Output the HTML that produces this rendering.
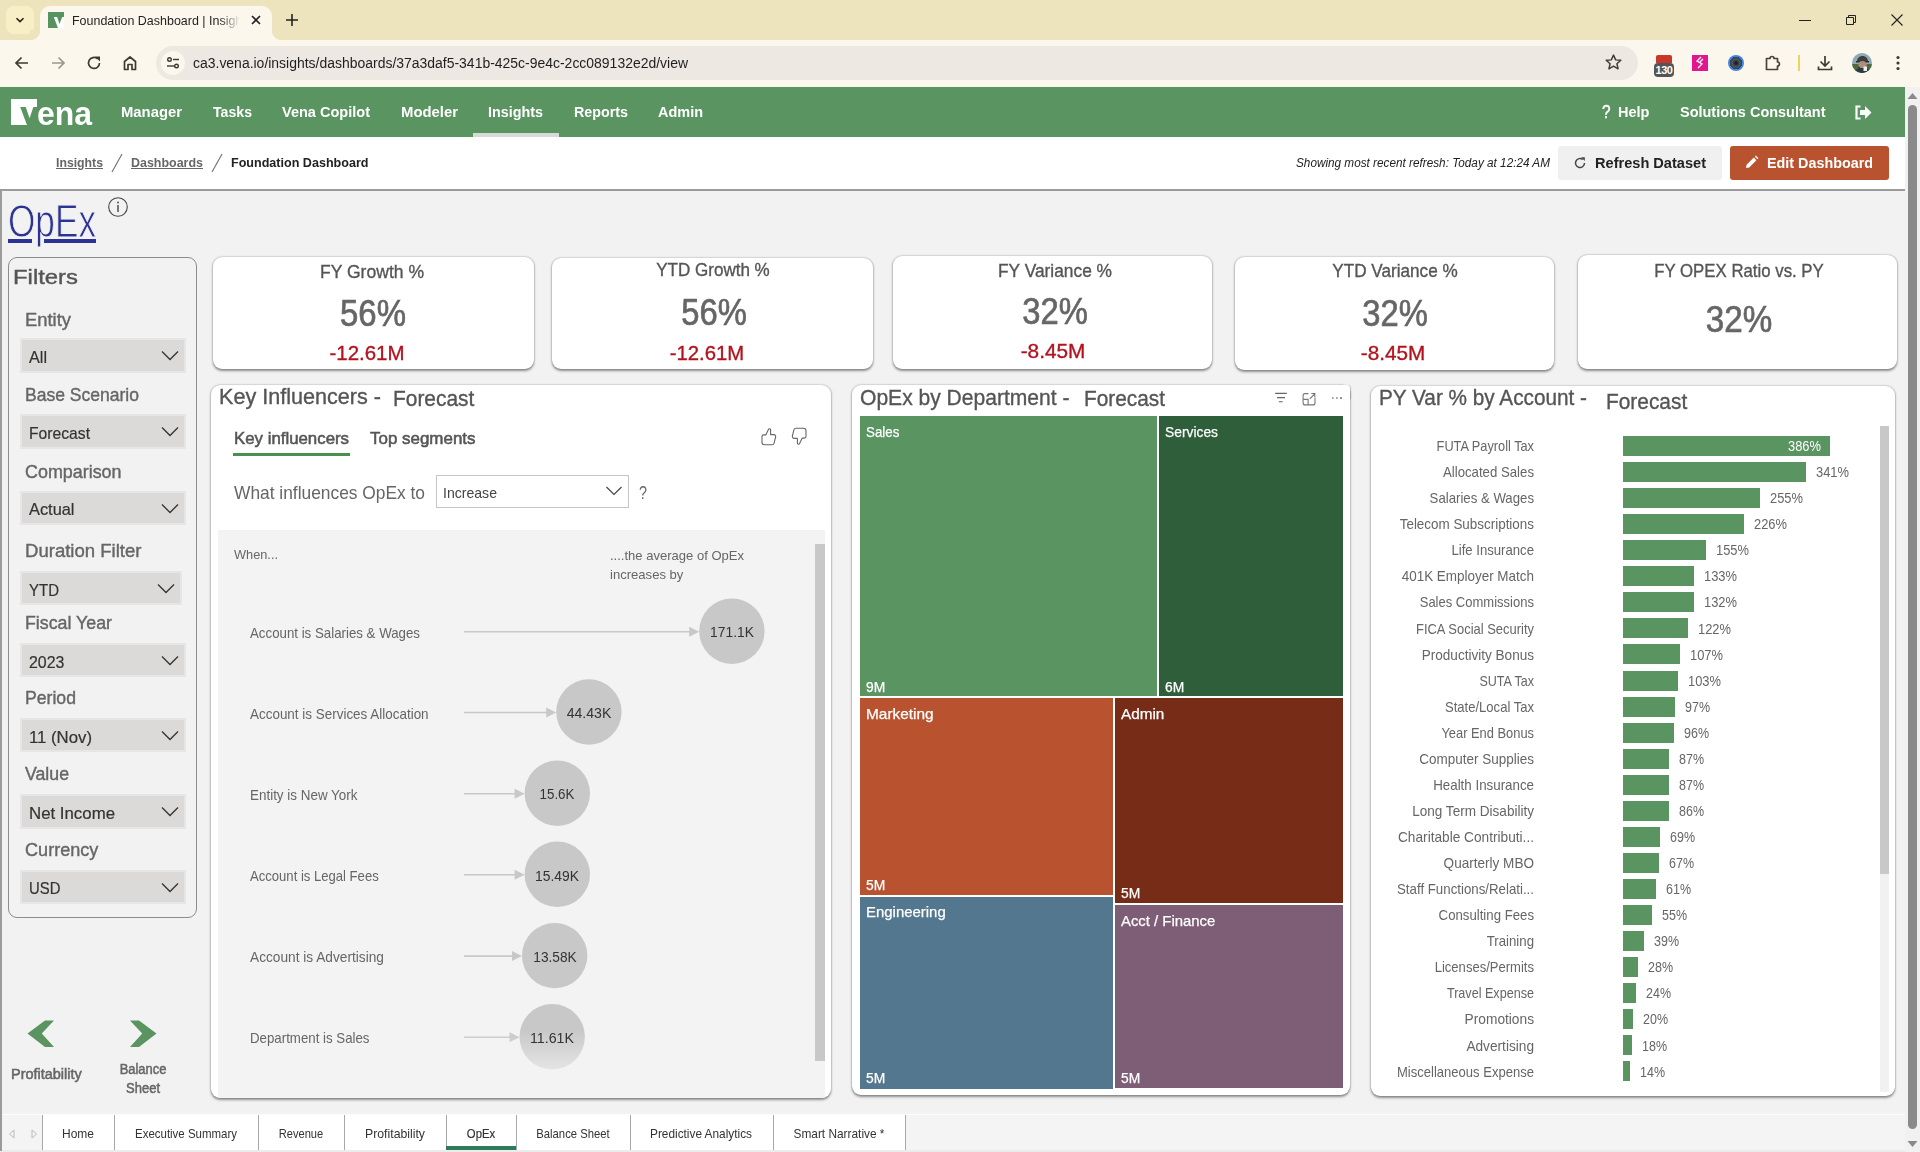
<!DOCTYPE html>
<html><head><meta charset="utf-8">
<style>
*{box-sizing:border-box;margin:0;padding:0}
html,body{width:1920px;height:1152px;overflow:hidden;background:#f2f2f2;font-family:"Liberation Sans",sans-serif}
.a{position:absolute}
.nw{white-space:nowrap}
.card{position:absolute;background:#fff;border-radius:9px;box-shadow:0 1.5px 2.5px rgba(0,0,0,.4),0 0 2px rgba(0,0,0,.28)}
.dd{position:absolute;background:#dddcda;border:2px solid #e8e8e8}
</style></head><body>
<div class="a" style="left:0px;top:0px;width:1920px;height:40px;background:#ede4bd;"></div><div class="a" style="left:6px;top:6px;width:28px;height:28px;background:#f8efc6;border-radius:8px"></div><svg class="a" style="left:14px;top:14px" width="12" height="12" viewBox="0 0 12 12"><path d="M2.5 4.2 6 7.6 9.5 4.2" fill="none" stroke="#222" stroke-width="1.6"/></svg><div class="a" style="left:40px;top:6px;width:232px;height:40px;background:#fcf7ec;border-radius:10px 10px 0 0"></div><div class="a" style="left:30px;top:30px;width:10px;height:10px;background:radial-gradient(circle at 0 0,#ede4bd 10px,#fcf7ec 10.5px);"></div><div class="a" style="left:272px;top:30px;width:10px;height:10px;background:radial-gradient(circle at 100% 0,#ede4bd 10px,#fcf7ec 10.5px);"></div><div class="a" style="left:48px;top:12px;width:16px;height:16px;background:#57935f;"></div><svg class="a" style="left:48px;top:12px" width="16" height="16" viewBox="48 12 16 16"><path d="M53.85 17.1H57.1L59.5 23.9 62.2 17.1H64V28H57.9z" fill="#fff"/></svg><div class="a" style="left:70px;top:8px;width:170px;height:24px;overflow:hidden;-webkit-mask-image:linear-gradient(90deg,#000 88%,transparent)"><div class="a nw" style="top:5.99px;font-size:13px;line-height:13px;color:#1f1f1f;left:2px;transform-origin:0 0;transform:scaleX(0.9591);">Foundation Dashboard | Insights</div></div><svg class="a" style="left:250px;top:14px" width="12" height="12" viewBox="0 0 12 12"><path d="M2 2 10 10M10 2 2 10" stroke="#222" stroke-width="1.6"/></svg><svg class="a" style="left:285px;top:13px" width="14" height="14" viewBox="0 0 14 14"><path d="M7 1v12M1 7h12" stroke="#222" stroke-width="1.6"/></svg><svg class="a" style="left:1798px;top:13px" width="14" height="14" viewBox="0 0 14 14"><path d="M1 7.5h12" stroke="#222" stroke-width="1"/></svg><svg class="a" style="left:1844px;top:13px" width="14" height="14" viewBox="0 0 14 14"><path d="M2.5 4.5h7v7h-7z M4.5 4.5V2.5h7v7h-2" fill="none" stroke="#222" stroke-width="1"/></svg><svg class="a" style="left:1890px;top:13px" width="14" height="14" viewBox="0 0 14 14"><path d="M1.5 1.5 12.5 12.5M12.5 1.5 1.5 12.5" stroke="#222" stroke-width="1.1"/></svg><div class="a" style="left:0px;top:40px;width:1920px;height:47px;background:#fcf7ec;"></div><svg class="a" style="left:13px;top:54px" width="18" height="18" viewBox="0 0 18 18"><path d="M15 9H3M8.5 3.5 3 9l5.5 5.5" fill="none" stroke="#3c3a33" stroke-width="1.7"/></svg><svg class="a" style="left:49px;top:54px" width="18" height="18" viewBox="0 0 18 18"><path d="M3 9h12M9.5 3.5 15 9l-5.5 5.5" fill="none" stroke="#9a978f" stroke-width="1.7"/></svg><svg class="a" style="left:85px;top:54px" width="18" height="18" viewBox="0 0 18 18"><path d="M14.5 9A5.5 5.5 0 1 1 12.6 4.8" fill="none" stroke="#3c3a33" stroke-width="1.7"/><path d="M10 2.5h5v5z" fill="#3c3a33"/></svg><svg class="a" style="left:121px;top:54px" width="18" height="18" viewBox="0 0 18 18"><path d="M3.5 15.5V7.5L9 3l5.5 4.5v8h-3.5v-5h-4v5z" fill="none" stroke="#3c3a33" stroke-width="1.7" stroke-linejoin="round"/></svg><div class="a" style="left:156px;top:46px;width:1482px;height:34px;background:#ede8e1;border-radius:17px"></div><div class="a" style="left:161px;top:51px;width:24px;height:24px;background:#fcf7ec;border-radius:12px"></div><svg class="a" style="left:165px;top:55px" width="16" height="16" viewBox="0 0 16 16"><circle cx="4.5" cy="4.5" r="1.8" fill="none" stroke="#3c3a33" stroke-width="1.4"/><path d="M8 4.5h6" stroke="#3c3a33" stroke-width="1.4"/><circle cx="11.5" cy="11" r="1.8" fill="none" stroke="#3c3a33" stroke-width="1.4"/><path d="M2 11h7" stroke="#3c3a33" stroke-width="1.4"/></svg><div class="a nw" style="top:55.65px;font-size:14px;line-height:14px;color:#1f1f1f;left:193px;transform-origin:0 0;transform:scaleX(0.9968);">ca3.vena.io/insights/dashboards/37a3daf5-341b-425c-9e4c-2cc089132e2d/view</div><svg class="a" style="left:1604px;top:53px" width="19" height="19" viewBox="0 0 20 20"><path d="M10 2.2l2.3 5 5.4.5-4.1 3.6 1.2 5.3L10 13.8l-4.8 2.8 1.2-5.3L2.3 7.7l5.4-.5z" fill="none" stroke="#3c3a33" stroke-width="1.5" stroke-linejoin="round"/></svg><div class="a" style="left:1656px;top:55px;width:16px;height:8px;background:#c9362b;border-radius:2px 2px 0 0"></div><div class="a" style="left:1654px;top:63px;width:20px;height:14px;background:#555;border-radius:4px;color:#fff;font-size:11px;line-height:14px;text-align:center;font-weight:bold;letter-spacing:-.5px">130</div><div class="a" style="left:1692px;top:55px;width:16px;height:16px;background:#e0178f;"></div><svg class="a" style="left:1692px;top:55px" width="16" height="16" viewBox="0 0 16 16"><path d="M9 2 5 6l5 3-4 4M11 4 8 7" fill="none" stroke="#fff" stroke-width="1.3"/></svg><div class="a" style="left:1728px;top:55px;width:16px;height:16px;background:radial-gradient(circle closest-side,#1e2226 0 15%,#4a5560 45%,#37424d 76%,#3d86f0 80%);border-radius:50%"></div><svg class="a" style="left:1764px;top:54px" width="18" height="18" viewBox="0 0 18 18"><path d="M2.5 4.5H6A2 2 0 0 1 10 4.5H13.5V8A2 2 0 0 1 13.5 12V15.5H2.5Z" fill="none" stroke="#4a4530" stroke-width="1.7" stroke-linejoin="round"/></svg><div class="a" style="left:1798px;top:55px;width:2px;height:16px;background:#f0d060;"></div><svg class="a" style="left:1816px;top:54px" width="18" height="18" viewBox="0 0 18 18"><path d="M9 2v10M4.5 7.5 9 12l4.5-4.5M2.5 12.5v3h13v-3" fill="none" stroke="#3c3a33" stroke-width="1.7"/></svg><svg class="a" style="left:1852px;top:53px" width="20" height="20" viewBox="0 0 20 20"><defs><clipPath id="avc"><circle cx="10" cy="10" r="10"/></clipPath></defs><g clip-path="url(#avc)"><rect width="20" height="20" fill="#8fa9b5"/><rect y="11" width="20" height="9" fill="#4d6b3a"/><path d="M5 9c0-4 2.5-6 5.5-6S16 5 16 9z" fill="#3d3f3a"/><path d="M4 8h13v1.6H4z" fill="#2b2d29"/><ellipse cx="10.5" cy="12" rx="4.2" ry="4" fill="#b08f78"/><path d="M6.5 12.5c1 4 7 4.5 8 0v5h-8z" fill="#2a2522"/><path d="M2 20c1-4 4-5 8.5-5s7.5 1 8.5 5z" fill="#2f3a45"/><rect x="11.5" y="13.5" width="3.5" height="4.5" fill="#e8eef3"/></g></svg><svg class="a" style="left:1890px;top:54px" width="16" height="18" viewBox="0 0 16 18"><circle cx="8" cy="3.5" r="1.6" fill="#3c3a33"/><circle cx="8" cy="9" r="1.6" fill="#3c3a33"/><circle cx="8" cy="14.5" r="1.6" fill="#3c3a33"/></svg><div class="a" style="left:0px;top:87px;width:1905px;height:50px;background:#5a9461;"></div><svg class="a" style="left:0;top:87px" width="100" height="50" viewBox="0 87 100 50"><path d="M11 99H37V107H33.35L29.6 118.35 25.7 107H20.2L27 125H11z" fill="#fff"/></svg><div class="a nw" style="top:96.21px;font-size:34px;line-height:34px;color:#fff;font-weight:700;left:36.5px;transform-origin:0 0;transform:scaleX(0.9387);">ena</div><div class="a nw" style="top:104.30px;font-size:15px;line-height:15px;color:#fff;font-weight:700;left:121px;transform-origin:0 0;transform:scaleX(0.9889);">Manager</div><div class="a nw" style="top:104.30px;font-size:15px;line-height:15px;color:#fff;font-weight:700;left:213px;transform-origin:0 0;transform:scaleX(0.9415);">Tasks</div><div class="a nw" style="top:104.30px;font-size:15px;line-height:15px;color:#fff;font-weight:700;left:282px;transform-origin:0 0;transform:scaleX(0.9687);">Vena Copilot</div><div class="a nw" style="top:104.30px;font-size:15px;line-height:15px;color:#fff;font-weight:700;left:401px;transform-origin:0 0;transform:scaleX(0.9910);">Modeler</div><div class="a nw" style="top:104.30px;font-size:15px;line-height:15px;color:#fff;font-weight:700;left:488px;transform-origin:0 0;transform:scaleX(0.9563);">Insights</div><div class="a nw" style="top:104.30px;font-size:15px;line-height:15px;color:#fff;font-weight:700;left:574px;transform-origin:0 0;transform:scaleX(0.9526);">Reports</div><div class="a nw" style="top:104.30px;font-size:15px;line-height:15px;color:#fff;font-weight:700;left:658px;transform-origin:0 0;transform:scaleX(0.9642);">Admin</div><div class="a nw" style="top:104.30px;font-size:15px;line-height:15px;color:#fff;font-weight:700;left:1617.5px;transform-origin:0 0;transform:scaleX(0.9688);">Help</div><div class="a nw" style="top:104.30px;font-size:15px;line-height:15px;color:#fff;font-weight:700;left:1679.5px;transform-origin:0 0;transform:scaleX(0.9647);">Solutions Consultant</div><div class="a nw" style="top:102.76px;font-size:18px;line-height:18px;color:#fff;left:1602px;transform-origin:0 0;transform:scaleX(0.8487);-webkit-text-stroke:0.5px #fff;">?</div><div class="a" style="left:473px;top:133px;width:86px;height:4px;background:#d9d9d9;"></div><svg class="a" style="left:1854px;top:105px" width="18" height="15" viewBox="0 0 18 15"><path d="M6.5 1.5H2.5v12h4" fill="none" stroke="#fff" stroke-width="2.2"/><path d="M6 5h5V1l6.5 6.5L11 14v-4H6z" fill="#fff"/></svg><div class="a" style="left:0px;top:137px;width:1905px;height:52px;background:#fff;"></div><div class="a nw" style="top:155.99px;font-size:13px;line-height:13px;color:#666;font-weight:700;left:56px;transform-origin:0 0;transform:scaleX(0.9429);text-decoration:underline;">Insights</div><svg class="a" style="left:110px;top:153px" width="14" height="20" viewBox="0 0 14 20"><path d="M12 1 2 19" stroke="#777" stroke-width="1.2"/></svg><div class="a nw" style="top:155.99px;font-size:13px;line-height:13px;color:#666;font-weight:700;left:131px;transform-origin:0 0;transform:scaleX(0.9582);text-decoration:underline;">Dashboards</div><svg class="a" style="left:210px;top:153px" width="14" height="20" viewBox="0 0 14 20"><path d="M12 1 2 19" stroke="#777" stroke-width="1.2"/></svg><div class="a nw" style="top:155.99px;font-size:13px;line-height:13px;color:#222;font-weight:700;left:230.5px;transform-origin:0 0;transform:scaleX(0.9664);">Foundation Dashboard</div><div class="a nw" style="top:156.84px;font-size:12px;line-height:12px;color:#222;font-style:italic;left:1296px;transform-origin:0 0;transform:scaleX(0.9797);">Showing most recent refresh: Today at 12:24 AM</div><div class="a" style="left:1558px;top:146px;width:164px;height:34px;background:#f0f0f0;border-radius:3px"></div><svg class="a" style="left:1573px;top:156px" width="14" height="14" viewBox="0 0 14 14"><path d="M11.5 7A4.5 4.5 0 1 1 9.8 3.5" fill="none" stroke="#444" stroke-width="1.5"/><path d="M8.2 1.3h3.6v3.6z" fill="#444"/></svg><div class="a nw" style="top:155.30px;font-size:15px;line-height:15px;color:#222;font-weight:700;left:1595px;transform-origin:0 0;transform:scaleX(0.9718);">Refresh Dataset</div><div class="a" style="left:1730px;top:146px;width:159px;height:34px;background:#b9532f;border-radius:3px"></div><svg class="a" style="left:1744px;top:155px" width="15" height="15" viewBox="0 0 15 15"><path d="M2 13l.6-3.2L9.8 2.6l2.6 2.6-7.2 7.2z" fill="#fff"/><path d="M10.8 1.6l1-1 2.6 2.6-1 1z" fill="#fff"/></svg><div class="a nw" style="top:155.30px;font-size:15px;line-height:15px;color:#fff;font-weight:700;left:1767px;transform-origin:0 0;transform:scaleX(0.9562);">Edit Dashboard</div><div class="a" style="left:0px;top:189px;width:1905px;height:2px;background:#9b9b9b;"></div><div class="a" style="left:0px;top:189px;width:2px;height:961px;background:#9b9b9b;"></div><div class="a nw" style="top:198.05px;font-size:46px;line-height:46px;color:#2b3494;left:8px;transform-origin:0 0;transform:scaleX(0.7649);-webkit-text-stroke:0.9px #f2f2f2;">OpEx</div><div class="a" style="left:8.3px;top:239px;width:23.7px;height:3.5px;background:#2b3494;"></div><div class="a" style="left:44.2px;top:239px;width:51.6px;height:3.5px;background:#2b3494;"></div><svg class="a" style="left:107px;top:196px" width="22" height="22" viewBox="0 0 22 22"><circle cx="11" cy="11" r="9.3" fill="none" stroke="#444" stroke-width="1.1"/><rect x="10.3" y="9" width="1.4" height="7" fill="#444"/><circle cx="11" cy="6.5" r="0.9" fill="#444"/></svg><div class="a" style="left:7.5px;top:257px;width:189.5px;height:661px;background:transparent;border:1px solid #8c8c8c;border-radius:9px"></div><div class="a nw" style="top:266.22px;font-size:21px;line-height:21px;color:#555;left:13px;transform-origin:0 0;transform:scaleX(1.1369);-webkit-text-stroke:0.4px #555;">Filters</div><div class="a nw" style="top:310.94px;font-size:18.5px;line-height:18.5px;color:#666;left:25px;transform-origin:0 0;transform:scaleX(0.9939);-webkit-text-stroke:0.4px #666;">Entity</div><div class="a nw" style="top:386.34px;font-size:18.5px;line-height:18.5px;color:#666;left:25px;transform-origin:0 0;transform:scaleX(0.9474);-webkit-text-stroke:0.4px #666;">Base Scenario</div><div class="a nw" style="top:462.84px;font-size:18.5px;line-height:18.5px;color:#666;left:25px;transform-origin:0 0;transform:scaleX(0.9674);-webkit-text-stroke:0.4px #666;">Comparison</div><div class="a nw" style="top:541.64px;font-size:18.5px;line-height:18.5px;color:#666;left:25px;transform-origin:0 0;transform:scaleX(1.0027);-webkit-text-stroke:0.4px #666;">Duration Filter</div><div class="a nw" style="top:614.34px;font-size:18.5px;line-height:18.5px;color:#666;left:25px;transform-origin:0 0;transform:scaleX(0.9613);-webkit-text-stroke:0.4px #666;">Fiscal Year</div><div class="a nw" style="top:688.74px;font-size:18.5px;line-height:18.5px;color:#666;left:25px;transform-origin:0 0;transform:scaleX(0.9535);-webkit-text-stroke:0.4px #666;">Period</div><div class="a nw" style="top:765.09px;font-size:18.5px;line-height:18.5px;color:#666;left:25px;transform-origin:0 0;transform:scaleX(0.9575);-webkit-text-stroke:0.4px #666;">Value</div><div class="a nw" style="top:841.34px;font-size:18.5px;line-height:18.5px;color:#666;left:25px;transform-origin:0 0;transform:scaleX(0.9779);-webkit-text-stroke:0.4px #666;">Currency</div><div class="a" style="left:19.5px;top:338px;width:166px;height:34.5px;background:#dcdad8;border:2px solid #e6e6e6"></div><div class="a nw" style="top:349.36px;font-size:17px;line-height:17px;color:#333;left:28.5px;transform-origin:0 0;transform:scaleX(0.9521);-webkit-text-stroke:0.2px #333;">All</div><svg class="a" style="left:160.5px;top:350px" width="18" height="11" viewBox="0 0 18 11"><path d="M1 1.5 9 9.5 17 1.5" fill="none" stroke="#333" stroke-width="1.3"/></svg><div class="a" style="left:19.5px;top:414px;width:166px;height:34.5px;background:#dcdad8;border:2px solid #e6e6e6"></div><div class="a nw" style="top:425.21px;font-size:17px;line-height:17px;color:#333;left:28.5px;transform-origin:0 0;transform:scaleX(0.9223);-webkit-text-stroke:0.2px #333;">Forecast</div><svg class="a" style="left:160.5px;top:426px" width="18" height="11" viewBox="0 0 18 11"><path d="M1 1.5 9 9.5 17 1.5" fill="none" stroke="#333" stroke-width="1.3"/></svg><div class="a" style="left:19.5px;top:490.6px;width:166px;height:34.5px;background:#dcdad8;border:2px solid #e6e6e6"></div><div class="a nw" style="top:501.01px;font-size:17px;line-height:17px;color:#333;left:28.5px;transform-origin:0 0;transform:scaleX(0.9630);-webkit-text-stroke:0.2px #333;">Actual</div><svg class="a" style="left:160.5px;top:502.6px" width="18" height="11" viewBox="0 0 18 11"><path d="M1 1.5 9 9.5 17 1.5" fill="none" stroke="#333" stroke-width="1.3"/></svg><div class="a" style="left:19.5px;top:570.5px;width:162px;height:34.5px;background:#dcdad8;border:2px solid #e6e6e6"></div><div class="a nw" style="top:581.61px;font-size:17px;line-height:17px;color:#333;left:28.5px;transform-origin:0 0;transform:scaleX(0.8824);-webkit-text-stroke:0.2px #333;">YTD</div><svg class="a" style="left:156.5px;top:582.5px" width="18" height="11" viewBox="0 0 18 11"><path d="M1 1.5 9 9.5 17 1.5" fill="none" stroke="#333" stroke-width="1.3"/></svg><div class="a" style="left:19.5px;top:642.5px;width:166px;height:34.5px;background:#dcdad8;border:2px solid #e6e6e6"></div><div class="a nw" style="top:653.61px;font-size:17px;line-height:17px;color:#333;left:28.5px;transform-origin:0 0;transform:scaleX(0.9358);-webkit-text-stroke:0.2px #333;">2023</div><svg class="a" style="left:160.5px;top:654.5px" width="18" height="11" viewBox="0 0 18 11"><path d="M1 1.5 9 9.5 17 1.5" fill="none" stroke="#333" stroke-width="1.3"/></svg><div class="a" style="left:19.5px;top:717.7px;width:166px;height:34.5px;background:#dcdad8;border:2px solid #e6e6e6"></div><div class="a nw" style="top:728.91px;font-size:17px;line-height:17px;color:#333;left:28.5px;transform-origin:0 0;transform:scaleX(0.9853);-webkit-text-stroke:0.2px #333;">11 (Nov)</div><svg class="a" style="left:160.5px;top:729.7px" width="18" height="11" viewBox="0 0 18 11"><path d="M1 1.5 9 9.5 17 1.5" fill="none" stroke="#333" stroke-width="1.3"/></svg><div class="a" style="left:19.5px;top:794px;width:166px;height:34.5px;background:#dcdad8;border:2px solid #e6e6e6"></div><div class="a nw" style="top:804.61px;font-size:17px;line-height:17px;color:#333;left:28.5px;transform-origin:0 0;transform:scaleX(0.9892);-webkit-text-stroke:0.2px #333;">Net Income</div><svg class="a" style="left:160.5px;top:806px" width="18" height="11" viewBox="0 0 18 11"><path d="M1 1.5 9 9.5 17 1.5" fill="none" stroke="#333" stroke-width="1.3"/></svg><div class="a" style="left:19.5px;top:869.75px;width:166px;height:34.5px;background:#dcdad8;border:2px solid #e6e6e6"></div><div class="a nw" style="top:879.81px;font-size:17px;line-height:17px;color:#333;left:28.5px;transform-origin:0 0;transform:scaleX(0.8745);-webkit-text-stroke:0.2px #333;">USD</div><svg class="a" style="left:160.5px;top:881.75px" width="18" height="11" viewBox="0 0 18 11"><path d="M1 1.5 9 9.5 17 1.5" fill="none" stroke="#333" stroke-width="1.3"/></svg><div class="card" style="left:213px;top:257px;width:321px;height:112px;border-radius:9px"></div><div class="a nw" style="top:262.74px;font-size:18.5px;line-height:18.5px;color:#555;left:-228px;width:1200px;text-align:center;transform-origin:50% 0;transform:scaleX(0.9483);-webkit-text-stroke:0.35px #555;">FY Growth %</div><div class="a nw" style="top:294.67px;font-size:37px;line-height:37px;color:#666;left:-227px;width:1200px;text-align:center;transform-origin:50% 0;transform:scaleX(0.8911);-webkit-text-stroke:0.7px #666;">56%</div><div class="a nw" style="top:342.02px;font-size:21px;line-height:21px;color:#b3121d;left:-233.5px;width:1200px;text-align:center;transform-origin:50% 0;transform:scaleX(0.9734);-webkit-text-stroke:0.35px #b3121d;">-12.61M</div><div class="card" style="left:552px;top:258px;width:321px;height:111px;border-radius:9px"></div><div class="a nw" style="top:261.34px;font-size:18.5px;line-height:18.5px;color:#555;left:113.25px;width:1200px;text-align:center;transform-origin:50% 0;transform:scaleX(0.9201);-webkit-text-stroke:0.35px #555;">YTD Growth %</div><div class="a nw" style="top:293.67px;font-size:37px;line-height:37px;color:#666;left:114.25px;width:1200px;text-align:center;transform-origin:50% 0;transform:scaleX(0.8844);-webkit-text-stroke:0.7px #666;">56%</div><div class="a nw" style="top:341.82px;font-size:21px;line-height:21px;color:#b3121d;left:106.79999999999995px;width:1200px;text-align:center;transform-origin:50% 0;transform:scaleX(0.9656);-webkit-text-stroke:0.35px #b3121d;">-12.61M</div><div class="card" style="left:893px;top:256px;width:319px;height:113px;border-radius:9px"></div><div class="a nw" style="top:261.59px;font-size:18.5px;line-height:18.5px;color:#555;left:455px;width:1200px;text-align:center;transform-origin:50% 0;transform:scaleX(0.9368);-webkit-text-stroke:0.35px #555;">FY Variance %</div><div class="a nw" style="top:293.37px;font-size:37px;line-height:37px;color:#666;left:455.25px;width:1200px;text-align:center;transform-origin:50% 0;transform:scaleX(0.8844);-webkit-text-stroke:0.7px #666;">32%</div><div class="a nw" style="top:340.12px;font-size:21px;line-height:21px;color:#b3121d;left:453.4000000000001px;width:1200px;text-align:center;transform-origin:50% 0;transform:scaleX(0.9899);-webkit-text-stroke:0.35px #b3121d;">-8.45M</div><div class="card" style="left:1235px;top:257px;width:319px;height:113px;border-radius:9px"></div><div class="a nw" style="top:261.84px;font-size:18.5px;line-height:18.5px;color:#555;left:795px;width:1200px;text-align:center;transform-origin:50% 0;transform:scaleX(0.9256);-webkit-text-stroke:0.35px #555;">YTD Variance %</div><div class="a nw" style="top:294.67px;font-size:37px;line-height:37px;color:#666;left:795.25px;width:1200px;text-align:center;transform-origin:50% 0;transform:scaleX(0.8844);-webkit-text-stroke:0.7px #666;">32%</div><div class="a nw" style="top:341.92px;font-size:21px;line-height:21px;color:#b3121d;left:792.8px;width:1200px;text-align:center;transform-origin:50% 0;transform:scaleX(0.9853);-webkit-text-stroke:0.35px #b3121d;">-8.45M</div><div class="card" style="left:1578px;top:255px;width:319px;height:114px;border-radius:9px"></div><div class="a nw" style="top:261.84px;font-size:18.5px;line-height:18.5px;color:#555;left:1138.75px;width:1200px;text-align:center;transform-origin:50% 0;transform:scaleX(0.9075);-webkit-text-stroke:0.35px #555;">FY OPEX Ratio vs. PY</div><div class="a nw" style="top:300.87px;font-size:37px;line-height:37px;color:#666;left:1139px;width:1200px;text-align:center;transform-origin:50% 0;transform:scaleX(0.8979);-webkit-text-stroke:0.7px #666;">32%</div><div class="card" style="left:211px;top:385px;width:620px;height:713px;overflow:hidden"><div class="a" style="left:7px;top:145px;width:607px;height:570px;background:#f3f3f3"></div></div><div class="a nw" style="top:386.50px;font-size:21.5px;line-height:21.5px;color:#555;left:219px;transform-origin:0 0;transform:scaleX(1.0042);-webkit-text-stroke:0.35px #555;">Key Influencers -</div><div class="a nw" style="top:388.80px;font-size:21.5px;line-height:21.5px;color:#555;left:393.4px;transform-origin:0 0;transform:scaleX(0.9720);-webkit-text-stroke:0.35px #555;">Forecast</div><div class="a nw" style="top:430.11px;font-size:17px;line-height:17px;color:#555;left:234px;transform-origin:0 0;transform:scaleX(0.9894);-webkit-text-stroke:0.55px #555;">Key influencers</div><div class="a" style="left:233px;top:453px;width:117px;height:3px;background:#4a8f52;"></div><div class="a nw" style="top:430.11px;font-size:17px;line-height:17px;color:#555;left:370.3px;transform-origin:0 0;transform:scaleX(0.9968);-webkit-text-stroke:0.55px #555;">Top segments</div><svg class="a" style="left:759px;top:426px" width="20" height="21" viewBox="0 0 20 21"><path d="M3 10.5c0-1 .8-1.6 1.6-1.6h2.2L9.4 3.5c.6-1.2 2.2-.9 2.2.4v4.7h3.2c1.3 0 2.1 1.2 1.8 2.4l-1.5 6.2c-.3 1-1.1 1.6-2 1.6H5.5c-1.4 0-2.5-1.1-2.5-2.5z" fill="none" stroke="#666" stroke-width="1.1" stroke-linejoin="round"/></svg><svg class="a" style="left:789px;top:426px" width="20" height="21" viewBox="0 0 20 21"><path d="M17 10.5c0 1-.8 1.6-1.6 1.6h-2.2l-2.6 5.4c-.6 1.2-2.2.9-2.2-.4v-4.7H5.2c-1.3 0-2.1-1.2-1.8-2.4l1.5-6.2c.3-1 1.1-1.6 2-1.6h7.6c1.4 0 2.5 1.1 2.5 2.5z" fill="none" stroke="#666" stroke-width="1.1" stroke-linejoin="round"/></svg><div class="a nw" style="top:483.54px;font-size:18.5px;line-height:18.5px;color:#666;left:234px;transform-origin:0 0;transform:scaleX(0.9381);">What influences OpEx to</div><div class="a" style="left:436px;top:475px;width:193px;height:33px;background:#fff;border:1px solid #c6c6c6"></div><div class="a nw" style="top:485.00px;font-size:15px;line-height:15px;color:#444;left:443px;transform-origin:0 0;transform:scaleX(0.9384);">Increase</div><svg class="a" style="left:605px;top:485px" width="18" height="12" viewBox="0 0 18 12"><path d="M1.5 2 9 9.5 16.5 2" fill="none" stroke="#444" stroke-width="1.2"/></svg><div class="a nw" style="top:483.76px;font-size:18px;line-height:18px;color:#666;left:639px;transform-origin:0 0;transform:scaleX(0.7988);">?</div><div class="a nw" style="top:548.07px;font-size:13.5px;line-height:13.5px;color:#666;left:234px;transform-origin:0 0;transform:scaleX(0.9456);">When...</div><div class="a nw" style="top:548.57px;font-size:13.5px;line-height:13.5px;color:#666;left:610px;transform-origin:0 0;transform:scaleX(0.9651);">....the average of OpEx</div><div class="a nw" style="top:567.57px;font-size:13.5px;line-height:13.5px;color:#666;left:610px;transform-origin:0 0;transform:scaleX(0.9684);">increases by</div><div class="a" style="left:815px;top:544px;width:10px;height:517px;background:#c8c8c8;"></div><svg class="a" style="left:0;top:0" width="900" height="1100"><line x1="464" y1="631.7" x2="691.2" y2="631.7" stroke="#c8c8c8" stroke-width="1.6"/><path d="M689.2 626.7L699.2 631.7L689.2 636.7z" fill="#c8c8c8"/><circle cx="731.9" cy="631.2" r="32.7" fill="#c8c8c8"/><line x1="464" y1="712.5" x2="548.2" y2="712.5" stroke="#c8c8c8" stroke-width="1.6"/><path d="M546.2 707.5L556.2 712.5L546.2 717.5z" fill="#c8c8c8"/><circle cx="588.9" cy="712" r="32.7" fill="#c8c8c8"/><line x1="464" y1="793.7" x2="516.6" y2="793.7" stroke="#c8c8c8" stroke-width="1.6"/><path d="M514.6 788.7L524.6 793.7L514.6 798.7z" fill="#c8c8c8"/><circle cx="557.3" cy="793.2" r="32.7" fill="#c8c8c8"/><line x1="464" y1="874.8" x2="516.6" y2="874.8" stroke="#c8c8c8" stroke-width="1.6"/><path d="M514.6 869.8L524.6 874.8L514.6 879.8z" fill="#c8c8c8"/><circle cx="557.3" cy="874.3" r="32.7" fill="#c8c8c8"/><line x1="464" y1="956.1" x2="514.0" y2="956.1" stroke="#c8c8c8" stroke-width="1.6"/><path d="M512.0 951.1L522.0 956.1L512.0 961.1z" fill="#c8c8c8"/><circle cx="554.7" cy="955.6" r="32.7" fill="#c8c8c8"/><line x1="464" y1="1037.3" x2="511.5" y2="1037.3" stroke="#c8c8c8" stroke-width="1.6"/><path d="M509.5 1032.3L519.5 1037.3L509.5 1042.3z" fill="#c8c8c8"/><circle cx="552.2" cy="1036.8" r="32.7" fill="#c8c8c8"/></svg><div class="a" style="left:218px;top:1030px;width:597px;height:45px;background:linear-gradient(180deg,rgba(243,243,243,0),rgba(243,243,243,.75));"></div><div class="a nw" style="top:625.72px;font-size:14.5px;line-height:14.5px;color:#666;left:250px;transform-origin:0 0;transform:scaleX(0.9157);">Account is Salaries & Wages</div><div class="a nw" style="top:624.40px;font-size:15px;line-height:15px;color:#333;left:131.89999999999998px;width:1200px;text-align:center;transform-origin:50% 0;transform:scaleX(0.9201);">171.1K</div><div class="a nw" style="top:706.72px;font-size:14.5px;line-height:14.5px;color:#666;left:250px;transform-origin:0 0;transform:scaleX(0.9272);">Account is Services Allocation</div><div class="a nw" style="top:705.20px;font-size:15px;line-height:15px;color:#333;left:-11.100000000000023px;width:1200px;text-align:center;transform-origin:50% 0;transform:scaleX(0.9380);">44.43K</div><div class="a nw" style="top:788.02px;font-size:14.5px;line-height:14.5px;color:#666;left:250px;transform-origin:0 0;transform:scaleX(0.9262);">Entity is New York</div><div class="a nw" style="top:786.40px;font-size:15px;line-height:15px;color:#333;left:-42.700000000000045px;width:1200px;text-align:center;transform-origin:50% 0;transform:scaleX(0.8877);">15.6K</div><div class="a nw" style="top:868.92px;font-size:14.5px;line-height:14.5px;color:#666;left:250px;transform-origin:0 0;transform:scaleX(0.9021);">Account is Legal Fees</div><div class="a nw" style="top:867.50px;font-size:15px;line-height:15px;color:#333;left:-42.700000000000045px;width:1200px;text-align:center;transform-origin:50% 0;transform:scaleX(0.9254);">15.49K</div><div class="a nw" style="top:950.22px;font-size:14.5px;line-height:14.5px;color:#666;left:250px;transform-origin:0 0;transform:scaleX(0.9446);">Account is Advertising</div><div class="a nw" style="top:948.80px;font-size:15px;line-height:15px;color:#333;left:-45.299999999999955px;width:1200px;text-align:center;transform-origin:50% 0;transform:scaleX(0.9128);">13.58K</div><div class="a nw" style="top:1031.22px;font-size:14.5px;line-height:14.5px;color:#666;left:250px;transform-origin:0 0;transform:scaleX(0.9153);">Department is Sales</div><div class="a nw" style="top:1030.00px;font-size:15px;line-height:15px;color:#333;left:-47.799999999999955px;width:1200px;text-align:center;transform-origin:50% 0;transform:scaleX(0.9475);">11.61K</div><div class="card" style="left:851.5px;top:384.5px;width:498.5px;height:710.5px"></div><div class="a" style="left:1338px;top:384.5px;width:12px;height:14px;background:#fff;border-radius:0 3px 0 0;box-shadow:1px 0 1px rgba(0,0,0,.2)"></div><div class="a nw" style="top:387.37px;font-size:22px;line-height:22px;color:#555;left:859.75px;transform-origin:0 0;transform:scaleX(0.9572);-webkit-text-stroke:0.35px #555;">OpEx by Department -</div><div class="a nw" style="top:387.97px;font-size:22px;line-height:22px;color:#555;left:1083.5px;transform-origin:0 0;transform:scaleX(0.9463);-webkit-text-stroke:0.35px #555;">Forecast</div><svg class="a" style="left:1270px;top:388px" width="80" height="22" viewBox="1270 388 80 22"><path d="M1275.2 393.4h11.6M1277 397.6h8M1278.8 401.8h4" stroke="#666" stroke-width="1.1"/><path d="M1308.5 393.6h-3.4a2 2 0 0 0-2 2v7.3a2 2 0 0 0 2 2h7.9a2 2 0 0 0 2-2v-5.3" fill="none" stroke="#777" stroke-width="1.1"/><path d="M1303.1 399.4h5v5.5" fill="none" stroke="#777" stroke-width="1.1"/><path d="M1309.8 398.8 1314.6 394M1311.3 393.5h3.5v3.5" fill="none" stroke="#777" stroke-width="1.1"/><circle cx="1332.8" cy="398" r="1" fill="#999"/><circle cx="1336.9" cy="398" r="1" fill="#999"/><circle cx="1341" cy="398" r="1.1" fill="#777"/></svg><div class="a" style="left:859.5px;top:415.5px;width:297.5px;height:280.5px;background:#5a9461;"></div><div class="a nw" style="top:424.30px;font-size:15px;line-height:15px;color:#fff;left:865.5px;transform-origin:0 0;transform:scaleX(0.8899);-webkit-text-stroke:0.25px #fff;">Sales</div><div class="a nw" style="top:679.55px;font-size:14px;line-height:14px;color:#fff;left:865.5px;transform-origin:0 0;transform:scaleX(0.9870);-webkit-text-stroke:0.25px #fff;">9M</div><div class="a" style="left:1159px;top:415.5px;width:184.2px;height:280.5px;background:#2e5e3a;"></div><div class="a nw" style="top:424.30px;font-size:15px;line-height:15px;color:#fff;left:1165px;transform-origin:0 0;transform:scaleX(0.9212);-webkit-text-stroke:0.25px #fff;">Services</div><div class="a nw" style="top:679.55px;font-size:14px;line-height:14px;color:#fff;left:1165px;transform-origin:0 0;transform:scaleX(0.9870);-webkit-text-stroke:0.25px #fff;">6M</div><div class="a" style="left:859.5px;top:698px;width:253.5px;height:197px;background:#b9532f;"></div><div class="a nw" style="top:706.30px;font-size:15px;line-height:15px;color:#fff;left:865.5px;transform-origin:0 0;transform:scaleX(1.0264);-webkit-text-stroke:0.25px #fff;">Marketing</div><div class="a nw" style="top:878.15px;font-size:14px;line-height:14px;color:#fff;left:865.5px;transform-origin:0 0;transform:scaleX(0.9870);-webkit-text-stroke:0.25px #fff;">5M</div><div class="a" style="left:1115px;top:698px;width:228.2px;height:205px;background:#772c17;"></div><div class="a nw" style="top:706.30px;font-size:15px;line-height:15px;color:#fff;left:1121px;transform-origin:0 0;transform:scaleX(1.0204);-webkit-text-stroke:0.25px #fff;">Admin</div><div class="a nw" style="top:886.15px;font-size:14px;line-height:14px;color:#fff;left:1121px;transform-origin:0 0;transform:scaleX(0.9870);-webkit-text-stroke:0.25px #fff;">5M</div><div class="a" style="left:859.5px;top:897px;width:253.5px;height:191.5px;background:#52778f;"></div><div class="a nw" style="top:904.30px;font-size:15px;line-height:15px;color:#fff;left:865.5px;transform-origin:0 0;transform:scaleX(0.9955);-webkit-text-stroke:0.25px #fff;">Engineering</div><div class="a nw" style="top:1071.45px;font-size:14px;line-height:14px;color:#fff;left:865.5px;transform-origin:0 0;transform:scaleX(0.9870);-webkit-text-stroke:0.25px #fff;">5M</div><div class="a" style="left:1115px;top:905.3px;width:228.2px;height:183.2px;background:#7e5d76;"></div><div class="a nw" style="top:913.30px;font-size:15px;line-height:15px;color:#fff;left:1121px;transform-origin:0 0;transform:scaleX(0.9921);-webkit-text-stroke:0.25px #fff;">Acct / Finance</div><div class="a nw" style="top:1071.45px;font-size:14px;line-height:14px;color:#fff;left:1121px;transform-origin:0 0;transform:scaleX(0.9870);-webkit-text-stroke:0.25px #fff;">5M</div><div class="card" style="left:1371px;top:385.5px;width:523.5px;height:710.5px"></div><div class="a nw" style="top:387.37px;font-size:22px;line-height:22px;color:#555;left:1379.2px;transform-origin:0 0;transform:scaleX(0.9432);-webkit-text-stroke:0.35px #555;">PY Var % by Account -</div><div class="a nw" style="top:390.87px;font-size:22px;line-height:22px;color:#555;left:1605.6px;transform-origin:0 0;transform:scaleX(0.9487);-webkit-text-stroke:0.35px #555;">Forecast</div><div class="a" style="left:1879.5px;top:426px;width:9.5px;height:666px;background:#f1f1f1;"></div><div class="a" style="left:1879.5px;top:426px;width:9.5px;height:448px;background:#c8c8c8;"></div><div class="a nw" style="top:439.12px;font-size:14.5px;line-height:14.5px;color:#666;left:334px;width:1200px;text-align:right;transform-origin:100% 0;transform:scaleX(0.8801);">FUTA Payroll Tax</div><div class="a" style="left:1622.75px;top:436.0px;width:207.28px;height:20px;background:#5a9461;"></div><div class="a nw" style="top:439.12px;font-size:14.5px;line-height:14.5px;color:#fff;left:621.0319999999999px;width:1200px;text-align:right;transform-origin:100% 0;transform:scaleX(0.8896);">386%</div><div class="a nw" style="top:465.18px;font-size:14.5px;line-height:14.5px;color:#666;left:334px;width:1200px;text-align:right;transform-origin:100% 0;transform:scaleX(0.9104);">Allocated Sales</div><div class="a" style="left:1622.75px;top:462.06px;width:183.12px;height:20px;background:#5a9461;"></div><div class="a nw" style="top:465.18px;font-size:14.5px;line-height:14.5px;color:#666;left:1815.867px;transform-origin:0 0;transform:scaleX(0.8896);">341%</div><div class="a nw" style="top:491.24px;font-size:14.5px;line-height:14.5px;color:#666;left:334px;width:1200px;text-align:right;transform-origin:100% 0;transform:scaleX(0.9101);">Salaries &amp; Wages</div><div class="a" style="left:1622.75px;top:488.12px;width:136.94px;height:20px;background:#5a9461;"></div><div class="a nw" style="top:491.24px;font-size:14.5px;line-height:14.5px;color:#666;left:1769.685px;transform-origin:0 0;transform:scaleX(0.8896);">255%</div><div class="a nw" style="top:517.30px;font-size:14.5px;line-height:14.5px;color:#666;left:334px;width:1200px;text-align:right;transform-origin:100% 0;transform:scaleX(0.9257);">Telecom Subscriptions</div><div class="a" style="left:1622.75px;top:514.18px;width:121.36px;height:20px;background:#5a9461;"></div><div class="a nw" style="top:517.30px;font-size:14.5px;line-height:14.5px;color:#666;left:1754.112px;transform-origin:0 0;transform:scaleX(0.8896);">226%</div><div class="a nw" style="top:543.36px;font-size:14.5px;line-height:14.5px;color:#666;left:334px;width:1200px;text-align:right;transform-origin:100% 0;transform:scaleX(0.9068);">Life Insurance</div><div class="a" style="left:1622.75px;top:540.24px;width:83.23px;height:20px;background:#5a9461;"></div><div class="a nw" style="top:543.36px;font-size:14.5px;line-height:14.5px;color:#666;left:1715.985px;transform-origin:0 0;transform:scaleX(0.8896);">155%</div><div class="a nw" style="top:569.42px;font-size:14.5px;line-height:14.5px;color:#666;left:334px;width:1200px;text-align:right;transform-origin:100% 0;transform:scaleX(0.9274);">401K Employer Match</div><div class="a" style="left:1622.75px;top:566.3px;width:71.42px;height:20px;background:#5a9461;"></div><div class="a nw" style="top:569.42px;font-size:14.5px;line-height:14.5px;color:#666;left:1704.171px;transform-origin:0 0;transform:scaleX(0.8896);">133%</div><div class="a nw" style="top:595.48px;font-size:14.5px;line-height:14.5px;color:#666;left:334px;width:1200px;text-align:right;transform-origin:100% 0;transform:scaleX(0.8977);">Sales Commissions</div><div class="a" style="left:1622.75px;top:592.36px;width:70.88px;height:20px;background:#5a9461;"></div><div class="a nw" style="top:595.48px;font-size:14.5px;line-height:14.5px;color:#666;left:1703.634px;transform-origin:0 0;transform:scaleX(0.8896);">132%</div><div class="a nw" style="top:621.54px;font-size:14.5px;line-height:14.5px;color:#666;left:334px;width:1200px;text-align:right;transform-origin:100% 0;transform:scaleX(0.8928);">FICA Social Security</div><div class="a" style="left:1622.75px;top:618.42px;width:65.51px;height:20px;background:#5a9461;"></div><div class="a nw" style="top:621.54px;font-size:14.5px;line-height:14.5px;color:#666;left:1698.2640000000001px;transform-origin:0 0;transform:scaleX(0.8896);">122%</div><div class="a nw" style="top:647.60px;font-size:14.5px;line-height:14.5px;color:#666;left:334px;width:1200px;text-align:right;transform-origin:100% 0;transform:scaleX(0.9351);">Productivity Bonus</div><div class="a" style="left:1622.75px;top:644.48px;width:57.46px;height:20px;background:#5a9461;"></div><div class="a nw" style="top:647.60px;font-size:14.5px;line-height:14.5px;color:#666;left:1690.209px;transform-origin:0 0;transform:scaleX(0.8896);">107%</div><div class="a nw" style="top:673.66px;font-size:14.5px;line-height:14.5px;color:#666;left:334px;width:1200px;text-align:right;transform-origin:100% 0;transform:scaleX(0.8647);">SUTA Tax</div><div class="a" style="left:1622.75px;top:670.54px;width:55.31px;height:20px;background:#5a9461;"></div><div class="a nw" style="top:673.66px;font-size:14.5px;line-height:14.5px;color:#666;left:1688.061px;transform-origin:0 0;transform:scaleX(0.8896);">103%</div><div class="a nw" style="top:699.72px;font-size:14.5px;line-height:14.5px;color:#666;left:334px;width:1200px;text-align:right;transform-origin:100% 0;transform:scaleX(0.9000);">State/Local Tax</div><div class="a" style="left:1622.75px;top:696.6px;width:52.09px;height:20px;background:#5a9461;"></div><div class="a nw" style="top:699.72px;font-size:14.5px;line-height:14.5px;color:#666;left:1684.839px;transform-origin:0 0;transform:scaleX(0.8611);">97%</div><div class="a nw" style="top:725.78px;font-size:14.5px;line-height:14.5px;color:#666;left:334px;width:1200px;text-align:right;transform-origin:100% 0;transform:scaleX(0.8880);">Year End Bonus</div><div class="a" style="left:1622.75px;top:722.66px;width:51.55px;height:20px;background:#5a9461;"></div><div class="a nw" style="top:725.78px;font-size:14.5px;line-height:14.5px;color:#666;left:1684.302px;transform-origin:0 0;transform:scaleX(0.8611);">96%</div><div class="a nw" style="top:751.84px;font-size:14.5px;line-height:14.5px;color:#666;left:334px;width:1200px;text-align:right;transform-origin:100% 0;transform:scaleX(0.9300);">Computer Supplies</div><div class="a" style="left:1622.75px;top:748.72px;width:46.72px;height:20px;background:#5a9461;"></div><div class="a nw" style="top:751.84px;font-size:14.5px;line-height:14.5px;color:#666;left:1679.469px;transform-origin:0 0;transform:scaleX(0.8611);">87%</div><div class="a nw" style="top:777.90px;font-size:14.5px;line-height:14.5px;color:#666;left:334px;width:1200px;text-align:right;transform-origin:100% 0;transform:scaleX(0.9195);">Health Insurance</div><div class="a" style="left:1622.75px;top:774.78px;width:46.72px;height:20px;background:#5a9461;"></div><div class="a nw" style="top:777.90px;font-size:14.5px;line-height:14.5px;color:#666;left:1679.469px;transform-origin:0 0;transform:scaleX(0.8611);">87%</div><div class="a nw" style="top:803.96px;font-size:14.5px;line-height:14.5px;color:#666;left:334px;width:1200px;text-align:right;transform-origin:100% 0;transform:scaleX(0.9348);">Long Term Disability</div><div class="a" style="left:1622.75px;top:800.84px;width:46.18px;height:20px;background:#5a9461;"></div><div class="a nw" style="top:803.96px;font-size:14.5px;line-height:14.5px;color:#666;left:1678.932px;transform-origin:0 0;transform:scaleX(0.8611);">86%</div><div class="a nw" style="top:830.02px;font-size:14.5px;line-height:14.5px;color:#666;left:334px;width:1200px;text-align:right;transform-origin:100% 0;transform:scaleX(0.9427);">Charitable Contributi...</div><div class="a" style="left:1622.75px;top:826.9px;width:37.05px;height:20px;background:#5a9461;"></div><div class="a nw" style="top:830.02px;font-size:14.5px;line-height:14.5px;color:#666;left:1669.803px;transform-origin:0 0;transform:scaleX(0.8611);">69%</div><div class="a nw" style="top:856.08px;font-size:14.5px;line-height:14.5px;color:#666;left:334px;width:1200px;text-align:right;transform-origin:100% 0;transform:scaleX(0.9350);">Quarterly MBO</div><div class="a" style="left:1622.75px;top:852.96px;width:35.98px;height:20px;background:#5a9461;"></div><div class="a nw" style="top:856.08px;font-size:14.5px;line-height:14.5px;color:#666;left:1668.729px;transform-origin:0 0;transform:scaleX(0.8611);">67%</div><div class="a nw" style="top:882.14px;font-size:14.5px;line-height:14.5px;color:#666;left:334px;width:1200px;text-align:right;transform-origin:100% 0;transform:scaleX(0.9155);">Staff Functions/Relati...</div><div class="a" style="left:1622.75px;top:879.02px;width:32.76px;height:20px;background:#5a9461;"></div><div class="a nw" style="top:882.14px;font-size:14.5px;line-height:14.5px;color:#666;left:1665.507px;transform-origin:0 0;transform:scaleX(0.8611);">61%</div><div class="a nw" style="top:908.20px;font-size:14.5px;line-height:14.5px;color:#666;left:334px;width:1200px;text-align:right;transform-origin:100% 0;transform:scaleX(0.9105);">Consulting Fees</div><div class="a" style="left:1622.75px;top:905.08px;width:29.54px;height:20px;background:#5a9461;"></div><div class="a nw" style="top:908.20px;font-size:14.5px;line-height:14.5px;color:#666;left:1662.285px;transform-origin:0 0;transform:scaleX(0.8611);">55%</div><div class="a nw" style="top:934.26px;font-size:14.5px;line-height:14.5px;color:#666;left:334px;width:1200px;text-align:right;transform-origin:100% 0;transform:scaleX(0.9121);">Training</div><div class="a" style="left:1622.75px;top:931.14px;width:20.94px;height:20px;background:#5a9461;"></div><div class="a nw" style="top:934.26px;font-size:14.5px;line-height:14.5px;color:#666;left:1653.693px;transform-origin:0 0;transform:scaleX(0.8611);">39%</div><div class="a nw" style="top:960.32px;font-size:14.5px;line-height:14.5px;color:#666;left:334px;width:1200px;text-align:right;transform-origin:100% 0;transform:scaleX(0.8994);">Licenses/Permits</div><div class="a" style="left:1622.75px;top:957.2px;width:15.04px;height:20px;background:#5a9461;"></div><div class="a nw" style="top:960.32px;font-size:14.5px;line-height:14.5px;color:#666;left:1647.786px;transform-origin:0 0;transform:scaleX(0.8611);">28%</div><div class="a nw" style="top:986.38px;font-size:14.5px;line-height:14.5px;color:#666;left:334px;width:1200px;text-align:right;transform-origin:100% 0;transform:scaleX(0.8691);">Travel Expense</div><div class="a" style="left:1622.75px;top:983.26px;width:12.89px;height:20px;background:#5a9461;"></div><div class="a nw" style="top:986.38px;font-size:14.5px;line-height:14.5px;color:#666;left:1645.638px;transform-origin:0 0;transform:scaleX(0.8611);">24%</div><div class="a nw" style="top:1012.44px;font-size:14.5px;line-height:14.5px;color:#666;left:334px;width:1200px;text-align:right;transform-origin:100% 0;transform:scaleX(0.9462);">Promotions</div><div class="a" style="left:1622.75px;top:1009.32px;width:10.74px;height:20px;background:#5a9461;"></div><div class="a nw" style="top:1012.44px;font-size:14.5px;line-height:14.5px;color:#666;left:1643.49px;transform-origin:0 0;transform:scaleX(0.8611);">20%</div><div class="a nw" style="top:1038.50px;font-size:14.5px;line-height:14.5px;color:#666;left:334px;width:1200px;text-align:right;transform-origin:100% 0;transform:scaleX(0.9424);">Advertising</div><div class="a" style="left:1622.75px;top:1035.38px;width:9.67px;height:20px;background:#5a9461;"></div><div class="a nw" style="top:1038.50px;font-size:14.5px;line-height:14.5px;color:#666;left:1642.416px;transform-origin:0 0;transform:scaleX(0.8611);">18%</div><div class="a nw" style="top:1064.56px;font-size:14.5px;line-height:14.5px;color:#666;left:334px;width:1200px;text-align:right;transform-origin:100% 0;transform:scaleX(0.8993);">Miscellaneous Expense</div><div class="a" style="left:1622.75px;top:1061.44px;width:7.52px;height:20px;background:#5a9461;"></div><div class="a nw" style="top:1064.56px;font-size:14.5px;line-height:14.5px;color:#666;left:1640.268px;transform-origin:0 0;transform:scaleX(0.8611);">14%</div><svg class="a" style="left:27px;top:1020px" width="28" height="28" viewBox="0 0 28 28"><path d="M27 0.5H18L0.5 13.5 18 27H27L14.8 13.5z" fill="#5a9461"/></svg><svg class="a" style="left:129px;top:1020px" width="28" height="28" viewBox="0 0 28 28"><path d="M1 0.5H10L27.5 13.5 10 27H1L13.2 13.5z" fill="#5a9461"/></svg><div class="a nw" style="top:1066.90px;font-size:14px;line-height:14px;color:#666;left:11.25px;transform-origin:0 0;transform:scaleX(1.0333);-webkit-text-stroke:0.5px #666;">Profitability</div><div class="a nw" style="top:1062.40px;font-size:14px;line-height:14px;color:#666;left:-457.1px;width:1200px;text-align:center;transform-origin:50% 0;transform:scaleX(0.9240);-webkit-text-stroke:0.5px #666;">Balance</div><div class="a nw" style="top:1080.65px;font-size:14px;line-height:14px;color:#666;left:-457px;width:1200px;text-align:center;transform-origin:50% 0;transform:scaleX(0.9291);-webkit-text-stroke:0.5px #666;">Sheet</div><div class="a" style="left:0px;top:1114px;width:1905px;height:38px;background:#f4f4f4;"></div><div class="a" style="left:0px;top:1114px;width:1905px;height:1px;background:#fdfdfd;"></div><div class="a" style="left:41.5px;top:1115px;width:863px;height:35px;background:#fff;"></div><div class="a" style="left:0px;top:1150px;width:1905px;height:2px;background:#ebebeb;"></div><div class="a" style="left:0px;top:1114px;width:2px;height:37px;background:#9b9b9b;"></div><div class="a" style="left:41.5px;top:1115px;width:1px;height:35px;background:#a8a8a8;"></div><div class="a" style="left:114.25px;top:1115px;width:1px;height:35px;background:#a8a8a8;"></div><div class="a" style="left:258.25px;top:1115px;width:1px;height:35px;background:#a8a8a8;"></div><div class="a" style="left:344.25px;top:1115px;width:1px;height:35px;background:#a8a8a8;"></div><div class="a" style="left:445.5px;top:1115px;width:1px;height:35px;background:#a8a8a8;"></div><div class="a" style="left:515.5px;top:1115px;width:1px;height:35px;background:#a8a8a8;"></div><div class="a" style="left:629.5px;top:1115px;width:1px;height:35px;background:#a8a8a8;"></div><div class="a" style="left:772.5px;top:1115px;width:1px;height:35px;background:#a8a8a8;"></div><div class="a" style="left:904.6px;top:1115px;width:1px;height:35px;background:#a8a8a8;"></div><svg class="a" style="left:5px;top:1127px" width="34" height="14" viewBox="0 0 34 14"><path d="M9 3 4.5 7 9 11z" fill="none" stroke="#bbb" stroke-width="1"/><path d="M27 3 31.5 7 27 11z" fill="none" stroke="#bbb" stroke-width="1"/></svg><div class="a nw" style="top:1126.99px;font-size:13px;line-height:13px;color:#333;left:-522.125px;width:1200px;text-align:center;transform-origin:50% 0;transform:scaleX(0.9225);">Home</div><div class="a nw" style="top:1126.99px;font-size:13px;line-height:13px;color:#333;left:-413.75px;width:1200px;text-align:center;transform-origin:50% 0;transform:scaleX(0.8824);">Executive Summary</div><div class="a nw" style="top:1126.99px;font-size:13px;line-height:13px;color:#333;left:-298.75px;width:1200px;text-align:center;transform-origin:50% 0;transform:scaleX(0.8550);">Revenue</div><div class="a nw" style="top:1126.99px;font-size:13px;line-height:13px;color:#333;left:-205.125px;width:1200px;text-align:center;transform-origin:50% 0;transform:scaleX(0.9437);">Profitability</div><div class="a nw" style="top:1126.99px;font-size:13px;line-height:13px;color:#333;left:-119.5px;width:1200px;text-align:center;transform-origin:50% 0;transform:scaleX(0.8704);-webkit-text-stroke:0.2px #333;">OpEx</div><div class="a nw" style="top:1126.99px;font-size:13px;line-height:13px;color:#333;left:-27.5px;width:1200px;text-align:center;transform-origin:50% 0;transform:scaleX(0.8678);">Balance Sheet</div><div class="a nw" style="top:1126.99px;font-size:13px;line-height:13px;color:#333;left:101.0px;width:1200px;text-align:center;transform-origin:50% 0;transform:scaleX(0.9107);">Predictive Analytics</div><div class="a nw" style="top:1126.99px;font-size:13px;line-height:13px;color:#333;left:238.54999999999995px;width:1200px;text-align:center;transform-origin:50% 0;transform:scaleX(0.9127);">Smart Narrative *</div><div class="a" style="left:445.5px;top:1146px;width:70px;height:4px;background:#2e7b5c;"></div><div class="a" style="left:1905px;top:87px;width:15px;height:1065px;background:#f1f1f1;"></div><div class="a" style="left:1908px;top:105px;width:9px;height:1024px;background:#8a8a8a;border-radius:4.5px"></div><svg class="a" style="left:1906px;top:91px" width="13" height="9" viewBox="0 0 13 9"><path d="M1.5 8 6.5 2 11.5 8z" fill="#8a8a8a"/></svg><svg class="a" style="left:1906px;top:1140px" width="13" height="9" viewBox="0 0 13 9"><path d="M1.5 1 6.5 7 11.5 1z" fill="#8a8a8a"/></svg></body></html>
